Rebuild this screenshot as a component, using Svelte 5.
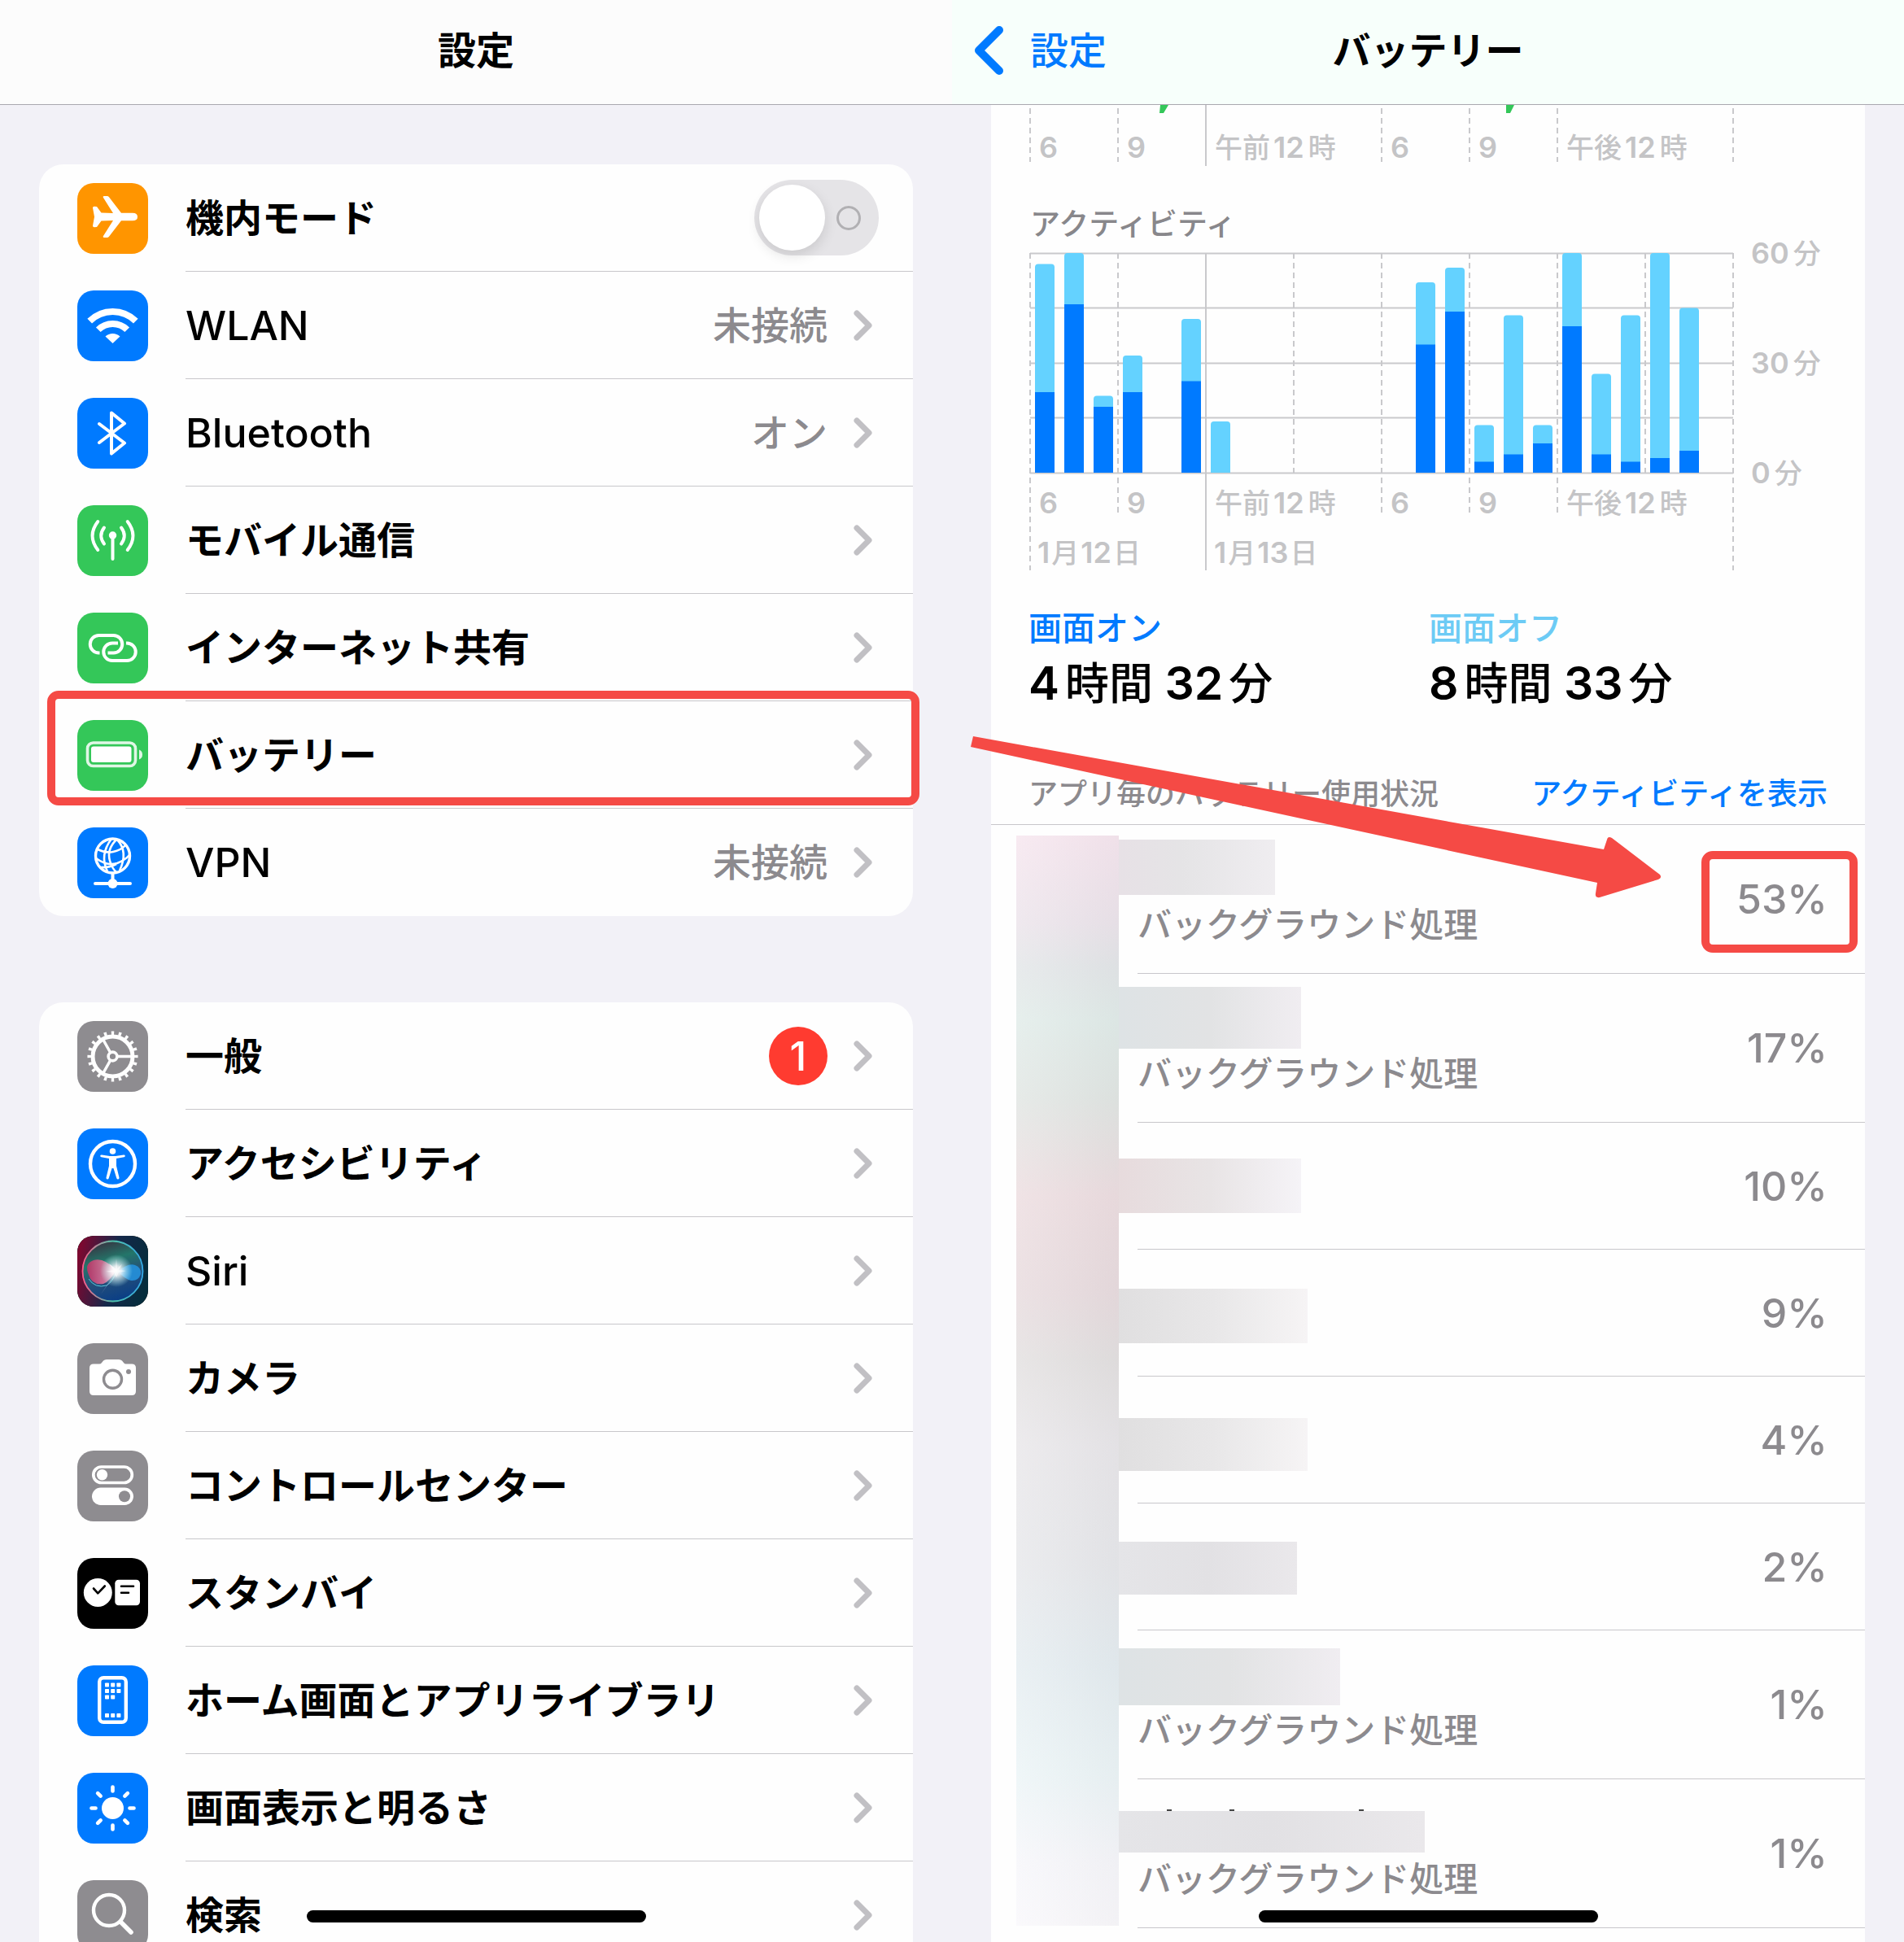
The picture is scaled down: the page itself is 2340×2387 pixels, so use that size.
<script lang="ts">
  const connectivity = [
    { icon: 'airplane', color: 'orange', label: '機内モード', toggle: true },
    { icon: 'wifi', color: 'blue', label: 'WLAN', value: '未接続', latin: true },
    { icon: 'bluetooth', color: 'blue', label: 'Bluetooth', value: 'オン', latin: true },
    { icon: 'cellular', color: 'green', label: 'モバイル通信' },
    { icon: 'hotspot', color: 'green', label: 'インターネット共有' },
    { icon: 'battery', color: 'green', label: 'バッテリー', marked: true },
    { icon: 'vpn', color: 'blue', label: 'VPN', value: '未接続', latin: true }
  ];

  const general = [
    { icon: 'gear', color: 'gray', label: '一般', badge: 1 },
    { icon: 'accessibility', color: 'blue', label: 'アクセシビリティ' },
    { icon: 'siri', color: 'black', label: 'Siri', latin: true },
    { icon: 'camera', color: 'gray', label: 'カメラ' },
    { icon: 'toggles', color: 'gray', label: 'コントロールセンター' },
    { icon: 'standby', color: 'black', label: 'スタンバイ' },
    { icon: 'home', color: 'blue', label: 'ホーム画面とアプリライブラリ' },
    { icon: 'sun', color: 'blue', label: '画面表示と明るさ' },
    { icon: 'search', color: 'gray', label: '検索' }
  ];

  // Minutes per hour: slot, total, screen on
  const activity = [
    { slot: 0, total: 57, on: 22 },
    { slot: 1, total: 60, on: 46 },
    { slot: 2, total: 21, on: 18 },
    { slot: 3, total: 32, on: 22 },
    { slot: 5, total: 42, on: 25 },
    { slot: 6, total: 14, on: 0 },
    { slot: 13, total: 52, on: 35 },
    { slot: 14, total: 56, on: 44 },
    { slot: 15, total: 13, on: 3 },
    { slot: 16, total: 43, on: 5 },
    { slot: 17, total: 13, on: 8 },
    { slot: 18, total: 60, on: 40 },
    { slot: 19, total: 27, on: 5 },
    { slot: 20, total: 43, on: 3 },
    { slot: 21, total: 60, on: 4 },
    { slot: 22, total: 45, on: 6 }
  ];

  const ticks = [
    { x: 48, text: '6' },
    { x: 156, text: '9' },
    { x: 264, pre: '午前', text: '12', post: '時' },
    { x: 480, text: '6' },
    { x: 588, text: '9' },
    { x: 696, pre: '午後', text: '12', post: '時' }
  ];

  // Hidden app names: offset, height and width of the mask in each row
  const apps = [
    { percent: 53, background: true, top: 18, height: 68, width: 192, tone: 'warm', marked: true },
    { percent: 17, background: true, top: 16, height: 76, width: 224, tone: 'cool' },
    { percent: 10, top: 44, height: 67, width: 224, tone: 'rose' },
    { percent: 9, top: 48, height: 67, width: 232, tone: 'plain' },
    { percent: 4, top: 51, height: 65, width: 232, tone: 'plain' },
    { percent: 2, top: 47, height: 65, width: 219, tone: 'dim' },
    { percent: 1, background: true, top: 22, height: 70, width: 272, tone: 'cool' },
    { percent: 1, background: true, top: 39, height: 51, width: 376, tone: 'dim', cut: true }
  ];

  let airplane = false;
</script>

{#snippet icon(name)}
  <svg class="glyph" viewBox="0 0 87 87" aria-hidden="true">
    {#if name === 'airplane'}
      <path class="fill" d="M19 30.500q0-2 2-1.800l3 .3 5.500 7.500 14.500.6-12-19q-1-2 1-2h3.500q1.500 0 2.500 1.200l15 19.500h14q6 0 6 4.700t-6 4.700h-14l-15 19.500q-1 1.200-2.500 1.200h-3.500q-2 0-1-2l12-19-14.500.6-5.500 7.500-3 .3q-2 .2-2-1.800l2-11z" />
    {:else if name === 'wifi'}
      <path class="line" stroke-width="8" d="M15.200 37.700a40 40 0 0 1 56.600 0M25.800 48.300a25 25 0 0 1 35.400 0" />
      <path class="fill" d="M43.500 65l-9-8.500a13 13 0 0 1 18 0z" />
    {:else if name === 'bluetooth'}
      <path class="line round" stroke-width="4" d="M27 32l31 23.500L42 68.500v-50L58 31.500 27 55" />
    {:else if name === 'cellular'}
      <circle class="fill" cx="43.500" cy="37" r="4.700" />
      <path class="line round" stroke-width="4" d="M43.500 38v28M33 27.500q-7.500 10 0 20M54 27.500q7.500 10 0 20M25.300 20q-13.500 17.500 0 35M61.700 20q13.500 17.500 0 35" />
    {:else if name === 'hotspot'}
      <path class="line" stroke-width="4" d="M27.500 49.500h-1a10.700 10.700 0 0 1 0-21.500h18a10.700 10.700 0 0 1 0 21.500h-7M50 37.500h-7a10.700 10.700 0 0 0 0 21.500h18a10.700 10.700 0 0 0 0-21.500h-1" />
    {:else if name === 'battery'}
      <rect class="line" x="12.500" y="28" width="59" height="28.500" rx="7" stroke-width="3.600" opacity=".85" />
      <rect class="fill" x="17" y="32.500" width="49.500" height="19.500" rx="3" />
      <path class="fill" opacity=".85" d="M76 36.500q4 1.500 4 6t-4 6z" />
    {:else if name === 'vpn'}
      <circle class="line" cx="43.500" cy="35" r="21" stroke-width="3.400" />
      <path class="line" stroke-width="2.600" d="M42 14q-15 20-5 40M48 15q-12 12-8 26 3 10 8 14M49 15q14 15 3 38M25 27q10 5 19 3 10-2 16-9M23 38q14 10 26 6 10-4 15-10M29 49q9 1 19-4" />
      <path class="line round" stroke-width="4" d="M43.500 57v12M22 69h43" />
      <circle class="fill" cx="43.500" cy="69" r="6" />
    {:else if name === 'gear'}
      <circle class="line" cx="43.500" cy="43.500" r="28.800" stroke-width="4.500" stroke-dasharray="3.400 5.648" stroke-dashoffset="1.700" pathLength="180.960" />
      <circle class="line" cx="43.500" cy="43.500" r="24.500" stroke-width="5" />
      <circle class="line" cx="43.500" cy="43.500" r="5.400" stroke-width="3.600" />
      <path class="line" stroke-width="3.400" d="M50 43.500h18M40.200 37.900l-9-16M40.200 49.100l-9 16" />
    {:else if name === 'accessibility'}
      <circle class="line" cx="43.500" cy="43.500" r="27.500" stroke-width="4.400" />
      <circle class="fill" cx="43.500" cy="28" r="3.800" />
      <path class="fill" d="M30 32.500l10 1.500h7l10-1.500q1.800 0 1.800 1.300t-1.300 1.500L48 37v9l3.500 14.500q.2 1.700-1.200 1.900t-2-1.200L44.500 49h-2l-3.800 12.200q-.6 1.400-2 1.200t-1.200-1.900L39 46v-9l-9.500-1.700q-1.300-.2-1.300-1.500t1.800-1.300z" />
    {:else if name === 'siri'}
      <defs>
        <linearGradient id="siri-back" x1="0" y1="0.400" x2="1" y2="0.600">
          <stop offset="0" stop-color="#7c0830" />
          <stop offset=".5" stop-color="#15284a" />
          <stop offset="1" stop-color="#052d3c" />
        </linearGradient>
        <linearGradient id="siri-orb" x1="0.200" y1="0" x2="0.500" y2="1">
          <stop offset="0" stop-color="#3a2b3c" />
          <stop offset=".35" stop-color="#23766a" />
          <stop offset=".65" stop-color="#254f78" />
          <stop offset="1" stop-color="#0b3f86" />
        </linearGradient>
        <linearGradient id="siri-ring" x1="0" y1="0.500" x2="1" y2="0.500">
          <stop offset="0" stop-color="#ff5c8b" />
          <stop offset=".5" stop-color="#4fc1a8" />
          <stop offset="1" stop-color="#35a9e8" />
        </linearGradient>
        <linearGradient id="siri-petal" x1="0" y1="0" x2="1" y2="0">
          <stop offset="0" stop-color="#c92f66" />
          <stop offset="1" stop-color="#f7a3c0" />
        </linearGradient>
        <radialGradient id="siri-glow">
          <stop offset="0" stop-color="#fff" />
          <stop offset=".3" stop-color="#fff" stop-opacity=".85" />
          <stop offset="1" stop-color="#bff" stop-opacity="0" />
        </radialGradient>
      </defs>
      <rect width="87" height="87" rx="20" fill="url(#siri-back)" />
      <circle cx="43.500" cy="43.500" r="37" fill="url(#siri-orb)" stroke="url(#siri-ring)" stroke-width="1.800" />
      <path fill="url(#siri-petal)" opacity=".85" d="M48 42Q32 26 20 30T14 48q4 13 18 11 8-3 16-17z" />
      <path fill="none" stroke="#58c8dc" stroke-width="1" d="M14 53q8 12 22 8 8-5 12-17" />
      <path fill="#2591dc" opacity=".9" d="M50 44q12-11 21-8 8 3 7 11-3 9-12 8-8-2-16-11z" />
      <path fill="#c6b9dc" opacity=".5" d="M49 44l19 23-14-17zM48 44L28 73l14-19z" />
      <circle cx="48" cy="43" r="20" fill="url(#siri-glow)" />
      <path fill="#fff" d="M48 28l1 12 6-5-4 7 9 1-9 2-3 6-3-6-10-1 9-2-5-8 8 6z" opacity=".5" />
    {:else if name === 'camera'}
      <path class="fill" d="M20 25.500h7q2 0 3-1.500l2-2.500q1.500-1.500 4-1.500h15q2.500 0 4 1.500l2 2.500q1 1.500 3 1.500h7q5 0 5 5V59q0 5-5 5H20q-5 0-5-5V30.500q0-5 5-5z" />
      <circle cx="43.500" cy="44.300" r="11" fill="none" stroke="#8e8c90" stroke-width="3.400" />
      <circle cx="63" cy="35" r="3" fill="#8e8c90" />
    {:else if name === 'toggles'}
      <rect class="line" x="19.800" y="20" width="47.500" height="19.500" rx="9.750" stroke-width="3.700" />
      <circle class="fill" cx="30.500" cy="29.700" r="6.700" />
      <rect class="fill" x="18" y="45.500" width="51" height="21.500" rx="10.750" />
      <circle cx="58" cy="56.300" r="7" fill="#8e8c90" />
    {:else if name === 'standby'}
      <circle class="fill" cx="25.300" cy="42.500" r="17.500" />
      <rect class="fill" x="46.300" y="26.700" width="30.700" height="31.600" rx="4.500" />
      <path class="round" fill="none" stroke="#000" stroke-width="2.600" d="M20 37.500l5.300 5.800 8.500-8.800M54 34.700h15M54 42.700h9" />
    {:else if name === 'home'}
      <rect class="line" x="27.200" y="15.200" width="32.600" height="54.600" rx="5" stroke-width="4.400" />
      {#each [[34, 21.5], [41.2, 21.5], [48.4, 21.5], [34, 29], [41.2, 29], [48.4, 29], [34, 36.5], [41.2, 36.5], [34, 59], [41.2, 59], [48.4, 59]] as [x, y]}
        <rect class="fill" {x} {y} width="5" height="5" rx=".8" />
      {/each}
    {:else if name === 'sun'}
      <circle class="fill" cx="43.500" cy="43.500" r="13.500" />
      {#each [0, 45, 90, 135, 180, 225, 270, 315] as angle}
        <path class="line round" stroke-width="4.600" d="M43.500 17.500v5" transform="rotate({angle} 43.500 43.500)" />
      {/each}
    {:else if name === 'search'}
      <circle class="line" cx="39" cy="37" r="19" stroke-width="4.400" />
      <path class="line round" stroke-width="5.600" d="M53.500 51.500l12.500 12.500" />
    {/if}
  </svg>
{/snippet}

{#snippet group(rows)}
  <ul class="card">
    {#each rows as row}
      <li class="row">
        <span class="tile {row.color}">{@render icon(row.icon)}</span>
        {#if row.toggle}
          <label class="cell">
            <span class="label">{row.label}</span>
            <input class="switch" type="checkbox" role="switch" bind:checked={airplane} />
          </label>
        {:else}
          <button class="cell" type="button">
            <span class="label" class:latin={row.latin}>{row.label}</span>
            {#if row.value}<span class="value">{row.value}</span>{/if}
            {#if row.badge}<span class="badge">{row.badge}</span>{/if}
            <svg class="chevron" viewBox="0 0 24 38" aria-hidden="true"><path d="M4 4l15 15L4 34" /></svg>
          </button>
        {/if}
        {#if row.marked}<span class="marker"></span>{/if}
      </li>
    {/each}
  </ul>
{/snippet}

<div class="stage">
  <section class="pane">
    <header class="nav">
      <h1>設定</h1>
    </header>
    <div class="groups">
      {@render group(connectivity)}
      {@render group(general)}
    </div>
    <span class="home-bar"></span>
  </section>

  <section class="pane">
    <header class="nav mint">
      <a class="back" href="#settings">
        <svg viewBox="0 0 36 60" aria-hidden="true"><path d="M31 5L6 30l25 25" /></svg>
        設定
      </a>
      <h1>バッテリー</h1>
    </header>

    <div class="sheet">
      <svg class="chart" viewBox="0 0 1074 572" role="img" aria-label="アクティビティ">
        <!-- tail of the battery level chart -->
        <path class="green" d="M208 0h10l-6 10h-5zM633 0h10l-5 10h-5z" />
        <path class="dash" d="M48 4v66M156 4v66M480 4v66M588 4v66M696 4v66M912 4v66" />
        <path class="rule" d="M264 0v75" />
        {#each [65, 502] as y}
          {#each ticks as tick}
            <text class="tick" x={tick.x + 11} {y}>{tick.pre ?? ''}<tspan class="num" dx={tick.pre ? 4 : 0}>{tick.text}</tspan>{#if tick.post}<tspan dx="5">{tick.post}</tspan>{/if}</text>
          {/each}
        {/each}

        <text class="caption" x="48" y="160">アクティビティ</text>
        <path class="rule" d="M48 182.500h864M48 249.500h864M48 317.500h864M48 384.500h864M48 452.500h864" />
        <path class="dash" d="M48 182v390M156 182v324M372 182v270M480 182v324M588 182v324M696 182v324M804 182v270M912 182v390" />
        <path class="rule" d="M264 182v390" />
        {#each activity as bar}
          <rect class="off" x={54 + bar.slot * 36} y={452 - bar.total * 4.5} width="24" height={bar.total * 4.5} rx="4" />
          <rect class={bar.on ? 'on' : 'off'} x={54 + bar.slot * 36} y={452 - (bar.on || 5) * 4.5} width="24" height={(bar.on || 5) * 4.5} />
        {/each}
        <text class="tick" x="934" y="195"><tspan class="num">60</tspan><tspan dx="5">分</tspan></text>
        <text class="tick" x="934" y="330"><tspan class="num">30</tspan><tspan dx="5">分</tspan></text>
        <text class="tick" x="934" y="465"><tspan class="num">0</tspan><tspan dx="5">分</tspan></text>
        <text class="tick" x="57" y="563"><tspan class="num">1</tspan><tspan dx="2">月</tspan><tspan class="num" dx="2">12</tspan><tspan dx="2">日</tspan></text>
        <text class="tick" x="274" y="563"><tspan class="num">1</tspan><tspan dx="2">月</tspan><tspan class="num" dx="2">13</tspan><tspan dx="2">日</tspan></text>
      </svg>

      <dl class="totals">
        <div>
          <dt class="screen-on">画面オン</dt>
          <dd><b>4</b>時間 <b>32</b>分</dd>
        </div>
        <div>
          <dt class="screen-off">画面オフ</dt>
          <dd><b>8</b>時間 <b>33</b>分</dd>
        </div>
      </dl>

      <div class="list-head">
        <h2>アプリ毎のバッテリー使用状況</h2>
        <button type="button">アクティビティを表示</button>
      </div>

      <div class="usage">
        <div class="strip"></div>
        <ul class="apps">
          {#each apps as app}
            <li class="app" class:tall={app.background}>
              <span class="mask {app.tone}" class:cut={app.cut} style="top: {app.top}px; height: {app.height}px; width: {app.width}px"></span>
              <div class="app-body">
                {#if app.background}<span class="note">バックグラウンド処理</span>{/if}
                <span class="percent">{app.percent}%</span>
              </div>
              {#if app.marked}<span class="marker small"></span>{/if}
            </li>
          {/each}
        </ul>
      </div>
    </div>
    <svg class="arrow" viewBox="0 0 860 210" aria-hidden="true">
      <path d="M6 5L781 144l4-12q1-5 6-2l59 45q3 4-2 6l-72 22q-6 1-5-5l2-13L3 18z" />
    </svg>
    <span class="home-bar"></span>
  </section>
</div>

<style>
  :global(body) {
    background: #f2f1f7;
  }

  .stage {
    --blue: #007aff;
    --sky: #64d2ff;
    --green: #34c759;
    --red: #f54a45;
    --line: #c8c7cb;
    --dim: #8c8a8e;
    display: grid;
    grid-template-columns: 1fr 1fr;
    grid-template-rows: 100%;
    height: 100vh;
    overflow: hidden;
    background: #f2f1f7;
    color: #000;
    font-family: Inter, 'Noto Sans CJK JP', sans-serif;
    font-size: 47px;
    font-weight: 500;
    line-height: 60px;
  }

  .pane {
    position: relative;
    min-width: 0;
  }

  ul, dl, dd, h1, h2 {
    margin: 0;
    padding: 0;
    list-style: none;
    font: inherit;
  }

  button {
    border: 0;
    padding: 0;
    background: none;
    color: inherit;
    font: inherit;
    text-align: left;
    cursor: pointer;
  }

  .nav {
    position: relative;
    display: flex;
    align-items: center;
    justify-content: center;
    height: 129px;
    padding-bottom: 4px;
    box-sizing: border-box;
    border-bottom: 1px solid #a9a8af;
    background: #fcfcfc;
  }
  .nav.mint { background: #f7fffb; }
  .nav h1 { font-weight: 700; }

  .back {
    position: absolute;
    left: 27px;
    display: flex;
    align-items: center;
    gap: 33px;
    color: var(--blue);
    text-decoration: none;
  }
  .back svg {
    width: 36px;
    height: 60px;
    fill: none;
    stroke: currentColor;
    stroke-width: 10;
    stroke-linecap: round;
    stroke-linejoin: round;
  }

  .groups {
    display: flex;
    flex-direction: column;
    gap: 106px;
    padding: 73px 48px 0;
  }

  .card {
    border-radius: 30px;
    background: #fefefe;
  }

  .row {
    position: relative;
    display: flex;
    align-items: center;
    height: 132px;
    padding-left: 47px;
  }

  .cell {
    display: flex;
    flex: 1;
    align-items: center;
    align-self: stretch;
    margin-left: 46px;
    padding-right: 49px;
    border-bottom: 1px solid var(--line);
  }
  label.cell { padding-right: 42px; }
  .row:last-child .cell { border-bottom-color: transparent; }

  .label {
    flex: 1;
    font-weight: 600;
  }
  .label.latin {
    font-size: 50px;
    font-weight: 500;
  }
  .value { color: var(--dim); }

  .badge {
    width: 72px;
    border-radius: 36px;
    background: #ff3b30;
    color: #fff;
    font-size: 50px;
    line-height: 72px;
    text-align: center;
  }

  .chevron {
    width: 24px;
    height: 38px;
    margin-left: 32px;
    fill: none;
    stroke: #c1c0c4;
    stroke-width: 7;
    stroke-linecap: round;
    stroke-linejoin: round;
  }

  .switch {
    position: relative;
    width: 153px;
    height: 93px;
    margin: 0;
    border-radius: 47px;
    background: #e5e4e7;
    appearance: none;
    cursor: pointer;
  }
  .switch::before {
    content: '';
    position: absolute;
    top: 6px;
    left: 6px;
    width: 81px;
    height: 81px;
    border-radius: 50%;
    background: #fff;
    box-shadow: 0 6px 16px rgba(0, 0, 0, 0.12);
  }
  .switch::after {
    content: '';
    position: absolute;
    top: 32px;
    right: 22px;
    width: 24px;
    height: 24px;
    border: 3px solid #b1b0b3;
    border-radius: 50%;
  }
  .switch:checked { background: var(--green); }
  .switch:checked::before { left: 66px; }

  .tile {
    width: 87px;
    height: 87px;
    border-radius: 20px;
    overflow: hidden;
  }
  .orange { background: #ff9500; }
  .blue { background: var(--blue); }
  .green { background: var(--green); }
  .gray { background: #8e8c90; }
  .black { background: #000; }

  .glyph { display: block; }
  .fill { fill: #fff; }
  .line { fill: none; stroke: #fff; }
  .round { stroke-linecap: round; stroke-linejoin: round; }

  .marker {
    position: absolute;
    top: -13px;
    right: -8px;
    bottom: 4px;
    left: 10px;
    border: 10px solid var(--red);
    border-radius: 14px;
    pointer-events: none;
  }
  .marker.small {
    top: 32px;
    right: 9px;
    bottom: 26px;
    left: auto;
    width: 172px;
  }

  .home-bar {
    position: absolute;
    bottom: 24px;
    left: 50%;
    width: 417px;
    height: 15px;
    margin-left: -208px;
    border-radius: 8px;
    background: #000;
  }

  .sheet {
    margin: 0 48px;
    padding-bottom: 24px;
    background: #fefefe;
  }

  .chart {
    display: block;
    width: 100%;
  }
  .chart .green { fill: var(--green); }
  .rule { fill: none; stroke: #c9c9cc; stroke-width: 2; }
  .dash { fill: none; stroke: #c9c9cc; stroke-width: 2; stroke-dasharray: 7 5; }
  .on { fill: var(--blue); }
  .off { fill: var(--sky); }
  .tick { fill: #c4c4c6; font-size: 34px; }
  .num { font-size: 36px; font-weight: 600; }
  .caption { fill: #88878b; font-size: 37px; }

  .totals {
    display: grid;
    grid-template-columns: 492px 1fr;
    padding: 41px 46px 0;
  }
  .totals dt { font-size: 41px; }
  .totals dd {
    margin-top: 8px;
    font-size: 54px;
    font-weight: 500;
  }
  .totals b { margin-right: 7px; font-size: 57px; font-weight: 600; }
  .screen-on { color: var(--blue); }
  .screen-off { color: #6ccbf5; }

  .list-head {
    display: flex;
    justify-content: space-between;
    padding: 75px 46px 7px;
    border-bottom: 1px solid var(--line);
    font-size: 36px;
  }
  .list-head h2 { color: var(--dim); }
  .list-head button { color: var(--blue); font-size: 37px; }

  .usage {
    display: flex;
    align-items: flex-start;
  }

  /* blurred app icons */
  .strip {
    flex: none;
    width: 126px;
    height: 1340px;
    margin: 13px 0 0 31px;
    background:
      linear-gradient(to right, rgba(255, 255, 255, 0.2), rgba(170, 170, 175, 0.08)),
      linear-gradient(#f6e5ee, #ebe3ea 8%, #e2e5e7 12%, #e0ebe8 17%, #e0e5e2 24%, #ecdcdf 33%, #e7dadd 42%, #e2dfdf 48%, #e8e6e9 56%, #e6e7ea 67%, #e4ecf0 76%, #ebf4f6 86%, #f6f6fa 94%, #f9f8fb);
  }

  .apps { flex: 1; }

  .app {
    position: relative;
    height: 156px;
    padding-left: 23px;
  }
  .app.tall { height: 183px; }

  .app-body {
    display: flex;
    align-items: center;
    height: 100%;
    padding-right: 46px;
    box-sizing: border-box;
    border-bottom: 1px solid var(--line);
    color: var(--dim);
  }
  .note {
    padding-top: 64px;
    font-size: 42px;
  }
  .percent {
    margin-left: auto;
    font-size: 50px;
  }

  .mask {
    position: absolute;
    left: 0;
    background: linear-gradient(to right, #e2e2e4, #e4e4e6 50%, #f0eef1);
  }
  .mask.warm { background: linear-gradient(to right, #e7e1e6, #e5e4e6 40%, #efedf0); }
  .mask.cool { background: linear-gradient(to right, #dee3e5, #e2e3e4 50%, #f0edf1); }
  .mask.rose { background: linear-gradient(to right, #e7dbdd, #e8e4e5 50%, #f5f3f7); }
  .mask.plain { background: linear-gradient(to right, #e0dfe0, #e8e7e8 50%, #f6f4f5); }
  .mask.dim { background: linear-gradient(to right, #e5e5e8, #e2e1e4 50%, #eae8eb); }

  /* letter tips that stick out above the mask */
  .mask.cut::before {
    content: '';
    position: absolute;
    top: -2px;
    left: 59px;
    width: 6px;
    height: 2px;
    background: #444;
    box-shadow: 77px 0 #444, 236px 0 #444;
  }

  .arrow {
    position: absolute;
    top: 900px;
    left: 20px;
    width: 860px;
    fill: var(--red);
  }
</style>
